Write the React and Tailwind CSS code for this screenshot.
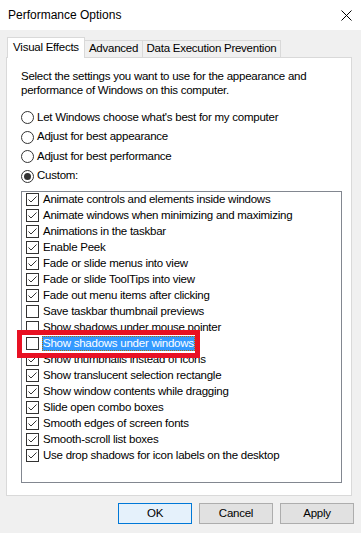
import React from "react";

const items = [
  ["Animate controls and elements inside windows", true],
  ["Animate windows when minimizing and maximizing", true],
  ["Animations in the taskbar", true],
  ["Enable Peek", true],
  ["Fade or slide menus into view", true],
  ["Fade or slide ToolTips into view", true],
  ["Fade out menu items after clicking", true],
  ["Save taskbar thumbnail previews", false],
  ["Show shadows under mouse pointer", false],
  ["Show shadows under windows", false, true],
  ["Show thumbnails instead of icons", true],
  ["Show translucent selection rectangle", true],
  ["Show window contents while dragging", true],
  ["Slide open combo boxes", true],
  ["Smooth edges of screen fonts", true],
  ["Smooth-scroll list boxes", true],
  ["Use drop shadows for icon labels on the desktop", true],
];

const radios = [
  ["Let Windows choose what's best for my computer", false],
  ["Adjust for best appearance", false],
  ["Adjust for best performance", false],
  ["Custom:", true],
];

function Radio({ on }) {
  return (
    <span className="w-[13px] h-[13px] rounded-full border border-[#333] bg-white flex items-center justify-center shrink-0">
      {on && <span className="w-[7px] h-[7px] rounded-full bg-[#333]" />}
    </span>
  );
}

function Check({ on }) {
  return (
    <span className="w-[13px] h-[13px] border border-[#333] bg-white flex shrink-0">
      {on && (
        <svg width="11" height="11" viewBox="0 0 11 11">
          <path d="M1.5 5.5 L4 8 L9.5 2.5" fill="none" stroke="#333" strokeWidth="1" />
        </svg>
      )}
    </span>
  );
}

function Button({ children, primary }) {
  return (
    <button
      className={
        primary
          ? "w-[74px] h-[21px] border border-[#0078d7] bg-[#e5f1fb] text-black"
          : "w-[74px] h-[21px] border border-[#adadad] bg-[#e1e1e1] text-black"
      }
    >
      {children}
    </button>
  );
}

export default function App() {
  return (
    <div
      className="w-[361px] h-[533px] bg-[#f0f0f0] text-[11.5px] tracking-[-0.25px] text-black overflow-hidden"
      style={{ fontFamily: "'Liberation Sans', Arial, sans-serif" }}
    >
      {/* title bar */}
      <div className="h-[30px] bg-white flex items-center justify-between pl-[8px] pr-[9px]">
        <span className="text-[12px] tracking-normal">Performance Options</span>
        <svg width="11" height="11" viewBox="0 0 11 11">
          <path d="M0.5 0.5 L10.5 10.5 M10.5 0.5 L0.5 10.5" stroke="#000" strokeWidth="1" />
        </svg>
      </div>

      {/* tabs */}
      <div className="flex items-end pl-[7px] mt-[7px] relative z-10 -mb-px">
        <div className="h-[21px] w-[78px] bg-white border border-b-0 border-[#d9d9d9] flex items-center justify-center">
          Visual Effects
        </div>
        <div className="h-[18px] w-[58px] bg-[#f0f0f0] border border-l-0 border-[#d9d9d9] flex items-center justify-center">
          Advanced
        </div>
        <div className="h-[18px] w-[138px] bg-[#f0f0f0] border border-l-0 border-[#d9d9d9] flex items-center justify-center">
          Data Execution Prevention
        </div>
      </div>

      {/* panel */}
      <div className="ml-[6px] w-[346px] h-[439px] bg-white border border-[#d9d9d9] pl-[14px] pt-[11px]">
        <p className="leading-[14px] w-[300px]">
          Select the settings you want to use for the appearance and performance of Windows on this computer.
        </p>

        <div className="mt-[14px] flex flex-col gap-[6.5px]">
          {radios.map(([label, on]) => (
            <div key={label} className="flex items-center gap-[3px] h-[13px]">
              <Radio on={on} />
              <span>{label}</span>
            </div>
          ))}
        </div>

        <div className="relative mt-[8px] w-[321px] h-[292px] border border-[#828790] bg-white">
          {items.map(([label, on, sel]) => (
            <div key={label} className="h-[16px] flex items-center pl-[4px] gap-[3px]">
              <Check on={on} />
              <span
                className={
                  sel
                    ? "bg-[#3399ff] text-white px-[1px] h-[15px] flex items-center outline-1 outline-dotted outline-[#b36b00] -outline-offset-1"
                    : "px-[1px]"
                }
              >
                {label}
              </span>
            </div>
          ))}
          <div className="absolute left-[-5px] top-[138px] w-[183px] h-[28px] border-[5px] border-[#e81123]" />
        </div>
      </div>

      {/* buttons */}
      <div className="flex justify-end gap-[7px] pr-[7px] mt-[7px]">
        <Button primary>OK</Button>
        <Button>Cancel</Button>
        <Button>Apply</Button>
      </div>
    </div>
  );
}
